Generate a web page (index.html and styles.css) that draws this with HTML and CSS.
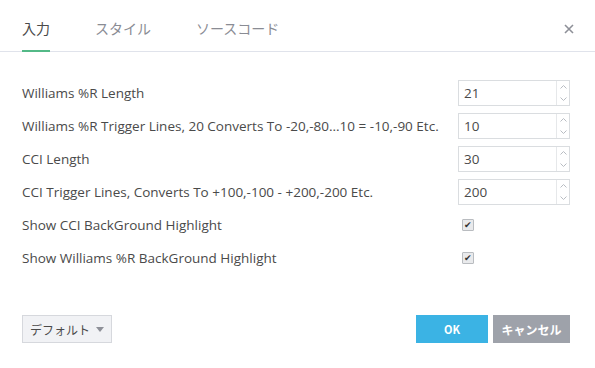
FILE: index.html
```html
<!DOCTYPE html>
<html lang="ja">
<head>
  <meta charset="UTF-8">
  <title>設定</title>
  <link rel="stylesheet" href="styles.css">
</head>
<body>
  <div class="dialog">
    <div class="tabs">
      <div class="tab active">入力</div>
      <div class="tab">スタイル</div>
      <div class="tab">ソースコード</div>
      <div class="close">
        <svg width="10" height="10" viewBox="0 0 10 10"><path d="M1 1 L9 9 M9 1 L1 9" stroke="#8e9098" stroke-width="1.6"/></svg>
      </div>
    </div>

    <div class="content">
      <div class="row">
        <span class="label">Williams %R Length</span>
        <div class="spin"><span class="value">21</span><div class="arrows"><span><svg width="7" height="4" viewBox="0 0 7 4"><path d="M0.5 3.5 L3.5 0.5 L6.5 3.5" fill="none" stroke="#b8bcc2"/></svg></span><span><svg width="7" height="4" viewBox="0 0 7 4"><path d="M0.5 0.5 L3.5 3.5 L6.5 0.5" fill="none" stroke="#b8bcc2"/></svg></span></div></div>
      </div>
      <div class="row">
        <span class="label">Williams %R Trigger Lines, 20 Converts To -20,-80...10 = -10,-90 Etc.</span>
        <div class="spin"><span class="value">10</span><div class="arrows"><span><svg width="7" height="4" viewBox="0 0 7 4"><path d="M0.5 3.5 L3.5 0.5 L6.5 3.5" fill="none" stroke="#b8bcc2"/></svg></span><span><svg width="7" height="4" viewBox="0 0 7 4"><path d="M0.5 0.5 L3.5 3.5 L6.5 0.5" fill="none" stroke="#b8bcc2"/></svg></span></div></div>
      </div>
      <div class="row">
        <span class="label">CCI Length</span>
        <div class="spin"><span class="value">30</span><div class="arrows"><span><svg width="7" height="4" viewBox="0 0 7 4"><path d="M0.5 3.5 L3.5 0.5 L6.5 3.5" fill="none" stroke="#b8bcc2"/></svg></span><span><svg width="7" height="4" viewBox="0 0 7 4"><path d="M0.5 0.5 L3.5 3.5 L6.5 0.5" fill="none" stroke="#b8bcc2"/></svg></span></div></div>
      </div>
      <div class="row">
        <span class="label">CCI Trigger Lines, Converts To +100,-100 - +200,-200 Etc.</span>
        <div class="spin"><span class="value">200</span><div class="arrows"><span><svg width="7" height="4" viewBox="0 0 7 4"><path d="M0.5 3.5 L3.5 0.5 L6.5 3.5" fill="none" stroke="#b8bcc2"/></svg></span><span><svg width="7" height="4" viewBox="0 0 7 4"><path d="M0.5 0.5 L3.5 3.5 L6.5 0.5" fill="none" stroke="#b8bcc2"/></svg></span></div></div>
      </div>
      <div class="row">
        <span class="label">Show CCI BackGround Highlight</span>
        <div class="check-cell"><span class="check">&#10004;</span></div>
      </div>
      <div class="row">
        <span class="label">Show Williams %R BackGround Highlight</span>
        <div class="check-cell"><span class="check">&#10004;</span></div>
      </div>
    </div>

    <div class="footer">
      <button class="btn-default">デフォルト <span class="caret"></span></button>
      <div class="actions">
        <button class="btn-ok">OK</button>
        <button class="btn-cancel">キャンセル</button>
      </div>
    </div>
  </div>
</body>
</html>
```

FILE: styles.css
```css
body {
  margin: 0;
  background: #fff;
  font-family: "Open Sans", "Noto Sans CJK JP", sans-serif;
  color: #4a4a4a;
}
.dialog {
  width: 595px;
  height: 368px;
  display: flex;
  flex-direction: column;
}
.tabs {
  display: flex;
  align-items: flex-end;
  height: 51px;
  border-bottom: 1px solid #e0e3eb;
  padding-left: 22px;
  gap: 45px;
  position: relative;
}
.tab {
  font-family: "Noto Sans CJK JP", sans-serif;
  font-size: 14px;
  color: #8a8c94;
  padding-bottom: 12px;
  border-bottom: 2px solid transparent;
  margin-bottom: -1px;
  line-height: 20px;
}
.tab.active {
  color: #4a4a4a;
  border-bottom-color: #53b987;
}
.close {
  position: absolute;
  right: 21px;
  top: 17px;
}
.content {
  padding: 28px 25px 0 22px;
  display: flex;
  flex-direction: column;
  gap: 7px;
}
.row {
  display: flex;
  align-items: center;
  justify-content: space-between;
  height: 26px;
  font-size: 13.5px;
}
.spin {
  width: 110px;
  height: 24px;
  border: 1px solid #dadde0;
  display: flex;
}
.value {
  flex: 1;
  padding-left: 5px;
  line-height: 24px;
  font-size: 13.5px;
  color: #4a4a4a;
}
.arrows {
  width: 12px;
  border-left: 1px solid #e6e8ea;
  display: flex;
  flex-direction: column;
}
.arrows span {
  height: 12px;
  display: flex;
  align-items: center;
  justify-content: center;
}
.check-cell {
  width: 112px;
  display: flex;
  padding-left: 4px;
  box-sizing: border-box;
}
.check {
  width: 10px;
  height: 10px;
  border: 1px solid #b9bcc0;
  background: #e9eaec;
  border-radius: 1px;
  font-size: 9px;
  line-height: 10px;
  text-align: center;
  color: #333;
}
.footer {
  margin-top: auto;
  height: 53px;
  display: flex;
  align-items: flex-start;
  justify-content: space-between;
  padding: 0 25px 0 22px;
}
button {
  height: 28px;
  font-family: "Noto Sans CJK JP", sans-serif;
  font-size: 12px;
  border: none;
  cursor: pointer;
}
.btn-default {
  width: 90px;
  background: #f1f2f5;
  border: 1px solid #d6d8dd;
  color: #4a4a4a;
  display: flex;
  align-items: center;
  justify-content: center;
  gap: 6px;
  padding: 0;
}
.caret {
  width: 0;
  height: 0;
  border-left: 4px solid transparent;
  border-right: 4px solid transparent;
  border-top: 5px solid #8e9098;
}
.actions {
  display: flex;
  gap: 5px;
}
.btn-ok {
  width: 72px;
  background: #3bb3e4;
  color: #fff;
  font-weight: bold;
  font-size: 11px;
}
.btn-cancel {
  width: 77px;
  background: #9ea2aa;
  color: #fff;
  font-weight: bold;
}
```
